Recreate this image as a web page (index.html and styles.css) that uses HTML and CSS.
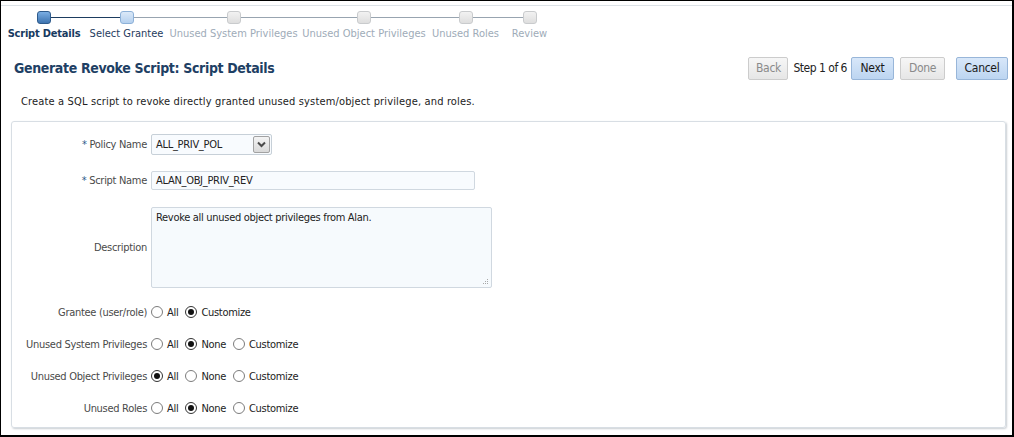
FILE: index.html
```html
<!DOCTYPE html>
<html>
<head>
<meta charset="utf-8">
<link rel="stylesheet" href="styles.css">
</head>
<body>
<div class="frame">
  <div class="train">
    <div class="step s1">
      <div class="track"><span class="ln none"></span><span class="mk mk-cur"></span><span class="ln dark"></span></div>
      <div class="lbl lbl-cur">Script Details</div>
    </div>
    <div class="step s2">
      <div class="track"><span class="ln dark"></span><span class="mk mk-next"></span><span class="ln"></span></div>
      <div class="lbl lbl-next">Select Grantee</div>
    </div>
    <div class="step s3">
      <div class="track"><span class="ln"></span><span class="mk"></span><span class="ln"></span></div>
      <div class="lbl">Unused System Privileges</div>
    </div>
    <div class="step s4">
      <div class="track"><span class="ln"></span><span class="mk"></span><span class="ln"></span></div>
      <div class="lbl">Unused Object Privileges</div>
    </div>
    <div class="step s5">
      <div class="track"><span class="ln"></span><span class="mk"></span><span class="ln"></span></div>
      <div class="lbl">Unused Roles</div>
    </div>
    <div class="step s6">
      <div class="track"><span class="ln"></span><span class="mk"></span><span class="ln none"></span></div>
      <div class="lbl">Review</div>
    </div>
  </div>

  <div class="titlebar">
    <h1 class="title">Generate Revoke Script: Script Details</h1>
    <div class="nav">
      <span class="btn btn-dis btn-back">Back</span>
      <span class="stepinfo">Step 1 of 6</span>
      <span class="btn btn-pri btn-next">Next</span>
      <span class="btn btn-dis btn-done">Done</span>
      <span class="btn btn-pri btn-cancel">Cancel</span>
    </div>
  </div>

  <p class="intro">Create a SQL script to revoke directly granted unused system/object privilege, and roles.</p>

  <div class="panel">
    <div class="row r-policy">
      <label class="lab"><span class="req">*</span> Policy Name</label>
      <div class="select">
        <span class="sel-val">ALL_PRIV_POL</span>
        <span class="sel-btn"><svg width="9" height="7" viewBox="0 0 9 7"><path d="M1 1.5 L4.5 5 L8 1.5" fill="none" stroke="#4a4a4a" stroke-width="2"/></svg></span>
      </div>
    </div>
    <div class="row r-script">
      <label class="lab"><span class="req">*</span> Script Name</label>
      <div class="input">ALAN_OBJ_PRIV_REV</div>
    </div>
    <div class="row r-desc">
      <label class="lab">Description</label>
      <div class="textarea">Revoke all unused object privileges from Alan.
        <svg class="grip" width="7" height="7" viewBox="0 0 7 7"><g fill="#a8a8a8"><rect x="5" y="1" width="1" height="1"/><rect x="3" y="3" width="1" height="1"/><rect x="5" y="3" width="1" height="1"/><rect x="1" y="5" width="1" height="1"/><rect x="3" y="5" width="1" height="1"/><rect x="5" y="5" width="1" height="1"/></g></svg>
      </div>
    </div>
    <div class="row r-radio r-first">
      <label class="lab">Grantee (user/role)</label>
      <div class="opts">
        <span class="opt"><span class="radio"></span>All</span>
        <span class="opt"><span class="radio on"></span>Customize</span>
      </div>
    </div>
    <div class="row r-radio">
      <label class="lab">Unused System Privileges</label>
      <div class="opts">
        <span class="opt"><span class="radio"></span>All</span>
        <span class="opt"><span class="radio on"></span>None</span>
        <span class="opt"><span class="radio"></span>Customize</span>
      </div>
    </div>
    <div class="row r-radio">
      <label class="lab">Unused Object Privileges</label>
      <div class="opts">
        <span class="opt"><span class="radio on"></span>All</span>
        <span class="opt"><span class="radio"></span>None</span>
        <span class="opt"><span class="radio"></span>Customize</span>
      </div>
    </div>
    <div class="row r-radio">
      <label class="lab">Unused Roles</label>
      <div class="opts">
        <span class="opt"><span class="radio"></span>All</span>
        <span class="opt"><span class="radio on"></span>None</span>
        <span class="opt"><span class="radio"></span>Customize</span>
      </div>
    </div>
  </div>
</div>
</body>
</html>
```

FILE: styles.css
```css
* { box-sizing: border-box; }
html, body { margin: 0; padding: 0; background: #fff; }
body {
  font-family: "DejaVu Sans Condensed", "DejaVu Sans", sans-serif;
  font-stretch: condensed;
  font-size: 11px;
  letter-spacing: -0.3px;
  color: #333;
}
.frame {
  width: 1014px;
  height: 437px;
  border-style: solid;
  border-color: #000;
  border-width: 1px 2px 2px 1px;
  overflow: hidden;
  background: #fff;
  padding-top: 4px;
}

/* train */
.train {
  display: flex;
  border-top: 1px solid #dce2e7;
  padding-left: 1px;
}
.step { display: flex; flex-direction: column; }
.s1 { width: 84px; }
.s2 { width: 81px; }
.s3 { width: 133px; }
.s4 { width: 128px; }
.s5 { width: 75px; }
.s6 { width: 53px; }
.track {
  display: flex;
  align-items: center;
  height: 13px;
  margin-top: 5px;
}
.ln { flex: 1; height: 1px; background: #98a4b0; }
.ln.dark { background: #1d3d60; }
.ln.none { background: transparent; }
.mk {
  width: 14px;
  height: 13px;
  border-radius: 3px;
  border: 1px solid #c9cbcd;
  background: linear-gradient(#f2f2f2, #dedede);
  flex: none;
}
.mk-cur {
  border-color: #2e5b8c;
  background: linear-gradient(#7aaee3, #3e74b0);
}
.mk-next {
  border-color: #8db1d8;
  background: linear-gradient(#dbe9f8, #b5d0ee);
}
.lbl {
  margin-top: 3px;
  line-height: 14px;
  text-align: center;
  white-space: nowrap;
  color: #9eabb8;
  letter-spacing: 0;
}
.lbl-cur { color: #173a60; font-weight: bold; letter-spacing: -0.2px; }
.lbl-next { color: #1f3b5e; }

/* title bar */
.titlebar {
  display: flex;
  justify-content: space-between;
  align-items: center;
  height: 24px;
  margin-top: 15px;
  padding: 0 4px 0 13px;
}
.title {
  margin: 0;
  font-size: 14px;
  font-weight: bold;
  letter-spacing: -0.35px;
  color: #1e4064;
}
.nav { display: flex; align-items: center; }
.btn {
  display: inline-flex;
  align-items: center;
  justify-content: center;
  height: 23px;
  border-radius: 2px;
  border: 1px solid #c6c6c6;
  padding: 0 6px;
  font-size: 12px;
}
.btn-dis {
  color: #8a8a8a;
  background: linear-gradient(#f6f6f6, #e6e6e6);
  border-color: #cccccc;
}
.btn-pri {
  color: #1a1a1a;
  background: linear-gradient(#d8e7f9, #bcd5f1);
  border-color: #98b6d9;
}
.btn-back { width: 40px; }
.stepinfo { margin: 0 4px 0 5px; color: #222; font-size: 12px; letter-spacing: -0.5px; }
.btn-next { width: 43px; }
.btn-done { width: 45px; margin-left: 6px; }
.btn-cancel { width: 52px; margin-left: 11px; }

.intro {
  margin: 15px 0 0 20px;
  line-height: 14px;
  color: #222;
  letter-spacing: 0.15px;
}

/* panel */
.panel {
  margin: 12px 6px 0 10px;
  height: 307px;
  border: 1px solid #d8dee4;
  border-radius: 3px;
  box-shadow: 1px 1px 2px #c9ced3;
  padding-top: 12px;
}
.row {
  display: grid;
  grid-template-columns: 135px 1fr;
  column-gap: 4px;
  align-items: center;
}
.lab { text-align: right; color: #4a4a4a; white-space: nowrap; }
.req { color: #2f5a8a; }
.r-script { margin-top: 16px; }
.r-desc { margin-top: 17px; }
.r-radio { height: 20px; margin-top: 12px; }
.r-first { margin-top: 14px; }

.select {
  width: 121px;
  height: 21px;
  border: 1px solid #c7d0d8;
  border-radius: 2px;
  background: #f8fbfe;
  display: flex;
  align-items: center;
  justify-content: space-between;
  padding: 0 1px 0 4px;
  color: #222;
}
.sel-btn {
  width: 17px;
  height: 17px;
  border: 1px solid #a2a2a2;
  border-radius: 2px;
  background: linear-gradient(#f4f4f4, #d9d9d9);
  display: flex;
  align-items: center;
  justify-content: center;
}
.input {
  width: 324px;
  height: 19px;
  border: 1px solid #d0d8e0;
  border-radius: 2px;
  background: #f8fbfe;
  padding: 2px 4px 0;
  line-height: 14px;
  color: #222;
}
.textarea {
  position: relative;
  width: 341px;
  height: 81px;
  border: 1px solid #d0d8e0;
  border-radius: 2px;
  background: #f6fafd;
  padding: 3px 4px 0;
  line-height: 14px;
  color: #222;
}
.grip { position: absolute; right: 2px; bottom: 2px; }

.opts { display: flex; align-items: center; gap: 7px; }
.opt { display: inline-flex; align-items: center; gap: 4px; color: #222; }
.radio {
  width: 12px;
  height: 12px;
  border-radius: 50%;
  border: 1px solid #7c7c7c;
  background: #fff;
  display: inline-flex;
  align-items: center;
  justify-content: center;
}
.radio.on { border-color: #333; }
.radio.on::after {
  content: "";
  width: 6px;
  height: 6px;
  border-radius: 50%;
  background: #111;
}
```
